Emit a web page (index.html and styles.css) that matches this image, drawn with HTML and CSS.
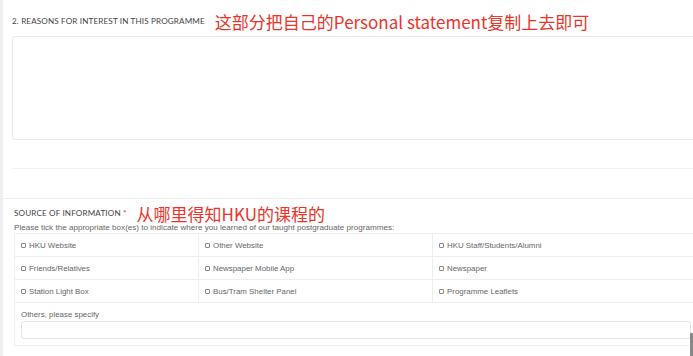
FILE: index.html
```html
<!DOCTYPE html>
<html lang="en">
<head>
    <meta charset="UTF-8">
    <meta name="viewport" content="width=device-width, initial-scale=1.0">
    <title>Application Form</title>
    <link rel="stylesheet" href="styles.css">
</head>
<body>
    <div class="page">
        <section class="block reasons">
            <div class="block-head">
                <h3 class="label">2. Reasons for interest in this programme</h3>
                <span class="note">这部分把自己的Personal statement复制上去即可</span>
            </div>
            <textarea class="textarea"></textarea>
            <div class="rule"></div>
        </section>

        <section class="block source">
            <div class="block-head">
                <h3 class="label">Source of information <span class="req">*</span></h3>
                <span class="note">从哪里得知HKU的课程的</span>
            </div>
            <p class="hint">Please tick the appropriate box(es) to indicate where you learned of our taught postgraduate programmes:</p>

            <table class="source-table">
                <tr>
                    <td class="col-a"><label><span class="box"></span>HKU Website</label></td>
                    <td class="col-b"><label><span class="box"></span>Other Website</label></td>
                    <td class="col-c"><label><span class="box"></span>HKU Staff/Students/Alumni</label></td>
                </tr>
                <tr>
                    <td><label><span class="box"></span>Friends/Relatives</label></td>
                    <td><label><span class="box"></span>Newspaper Mobile App</label></td>
                    <td><label><span class="box"></span>Newspaper</label></td>
                </tr>
                <tr>
                    <td><label><span class="box"></span>Station Light Box</label></td>
                    <td><label><span class="box"></span>Bus/Tram Shelter Panel</label></td>
                    <td><label><span class="box"></span>Programme Leaflets</label></td>
                </tr>
                <tr>
                    <td colspan="3" class="others">
                        <div class="others-label">Others, please specify</div>
                        <input type="text" class="others-input">
                    </td>
                </tr>
            </table>
        </section>
    </div>
    <div class="scroll-thumb"></div>
</body>
</html>
```

FILE: styles.css
```css
* {
    margin: 0;
    padding: 0;
    box-sizing: border-box;
}

html, body {
    height: 100%;
    overflow: hidden;
}

body {
    font-family: 'Liberation Sans', Arial, sans-serif;
    color: #555;
    background-color: #fff;
    position: relative;
}

.page {
    width: 720px;
    min-height: 100%;
    border-left: 3px solid #efefef;
}

.block-head {
    display: flex;
    align-items: center;
    gap: 10px;
}

.label {
    font-family: 'Lato', 'Open Sans', sans-serif;
    font-size: 8.1px;
    font-weight: 400;
    text-transform: uppercase;
    color: #444;
    letter-spacing: 0.15px;
}

.req {
    color: #d33;
}

.note {
    font-family: 'Noto Sans CJK SC', 'Noto Sans', sans-serif;
    font-size: 17px;
    color: #e8352b;
    line-height: 1;
}

/* section 1 */
.reasons {
    padding: 10px 0 0 9px;
    border-bottom: 1px solid #eef0f2;
}

.reasons .block-head {
    height: 22px;
    margin-bottom: 4px;
}

.textarea {
    display: block;
    width: 700px;
    height: 104px;
    border: 1px solid #e6e8ea;
    border-radius: 3px;
    resize: none;
    background: #fff;
}

.rule {
    height: 29px;
    border-bottom: 1px solid #f0f1f3;
    margin-bottom: 29px;
}

/* section 2 */
.source {
    padding: 5px 0 0 11px;
}

.source .block-head {
    height: 18px;
}

.hint {
    font-size: 8.1px;
    color: #666;
    line-height: 10px;
    margin-top: 1px;
}

.source-table {
    width: 682px;
    border-collapse: collapse;
    font-size: 7.9px;
    color: #666;
}

.source-table td {
    height: 23px;
    padding: 0 6px;
    border: 1px solid #eceef0;
    border-right: none;
    vertical-align: middle;
}

.source-table .col-a {
    width: 184px;
}

.source-table .col-b {
    width: 234px;
}

.source-table label {
    display: flex;
    align-items: center;
}

.box {
    display: inline-block;
    width: 5px;
    height: 5px;
    border: 1px solid #888;
    border-radius: 1px;
    margin-right: 3px;
}

.source-table .others {
    height: 42px;
    padding: 7px 6px 6px;
    vertical-align: top;
}

.others-label {
    line-height: 10px;
    margin-bottom: 1px;
}

.others-input {
    display: block;
    width: 670px;
    height: 18px;
    border: 1px solid #e3e5e8;
    border-radius: 3px;
}

.scroll-thumb {
    position: absolute;
    right: 0;
    top: 333px;
    width: 3px;
    height: 23px;
    background-color: #888;
}
```
